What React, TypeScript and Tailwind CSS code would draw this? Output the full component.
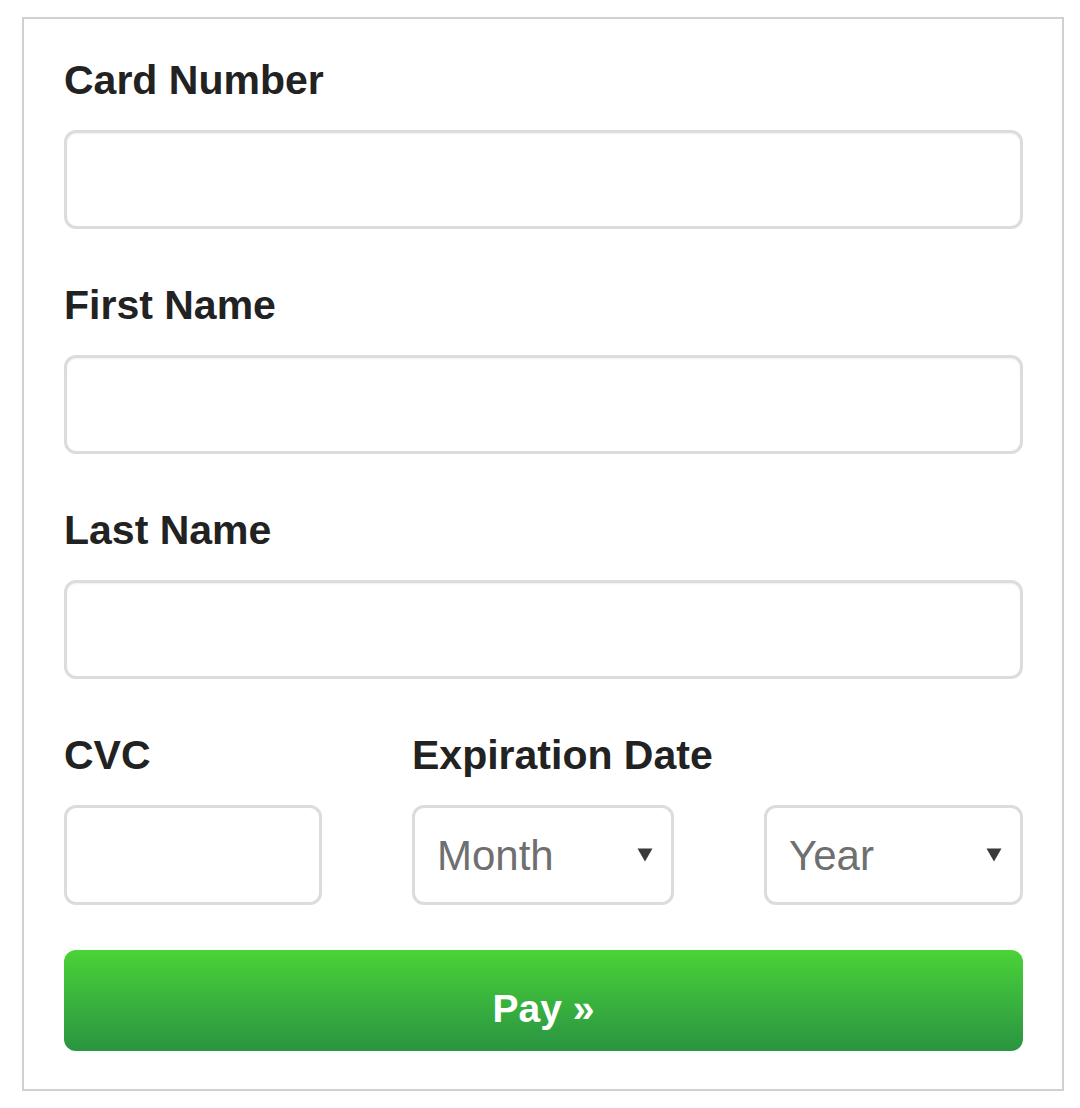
const font = { fontFamily: '"Liberation Sans", Arial, sans-serif' };

function Caret() {
  return (
    <svg width="16" height="14" viewBox="0 0 16 14" className="shrink-0">
      <path d="M0.5 0.5 H15.5 L8 13.5 Z" fill="#3a3a3a" />
    </svg>
  );
}

function Field({ label }: { label: string }) {
  return (
    <div className="flex flex-col mb-[52px]">
      <label className="text-[41px] font-bold leading-[49px] text-[#222]">{label}</label>
      <div className="mt-[25px] h-[99px] rounded-[12px] border-[3px] border-[#dcdcdc] bg-white shadow-[inset_0_1px_2px_rgba(0,0,0,0.06)]" />
    </div>
  );
}

function Select({ text, width }: { text: string; width: string }) {
  return (
    <div className={`${width} h-[100px] rounded-[12px] border-[3px] border-[#dcdcdc] bg-white flex items-center justify-between pl-[22px] pr-[18px]`}>
      <span className="text-[42px] text-[#6f6f6f]">{text}</span>
      <Caret />
    </div>
  );
}

export default function App() {
  return (
    <div className="min-h-[1108px] bg-white pt-[17px] pl-[22px]" style={font}>
      <div className="w-[1042px] h-[1074px] border-2 border-[#d0d0d0] pt-[37px] pl-[40px] pr-[39px]">
        <Field label="Card Number" />
        <Field label="First Name" />
        <Field label="Last Name" />

        <div className="flex">
          <div className="flex flex-col w-[348px]">
            <label className="text-[41px] font-bold leading-[49px] text-[#222]">CVC</label>
            <div className="mt-[25px] h-[100px] w-[258px] rounded-[12px] border-[3px] border-[#dcdcdc] bg-white" />
          </div>
          <div className="flex flex-col flex-1">
            <label className="text-[41px] font-bold leading-[49px] text-[#222]">Expiration Date</label>
            <div className="mt-[25px] flex justify-between">
              <Select text="Month" width="w-[262px]" />
              <Select text="Year" width="w-[259px]" />
            </div>
          </div>
        </div>

        <button className="mt-[45px] w-full h-[101px] rounded-[12px] bg-gradient-to-b from-[#4ad335] to-[#2a9440] text-white text-[39px] font-bold flex items-center justify-center pt-[18px]">
          Pay »
        </button>
      </div>
    </div>
  );
}
